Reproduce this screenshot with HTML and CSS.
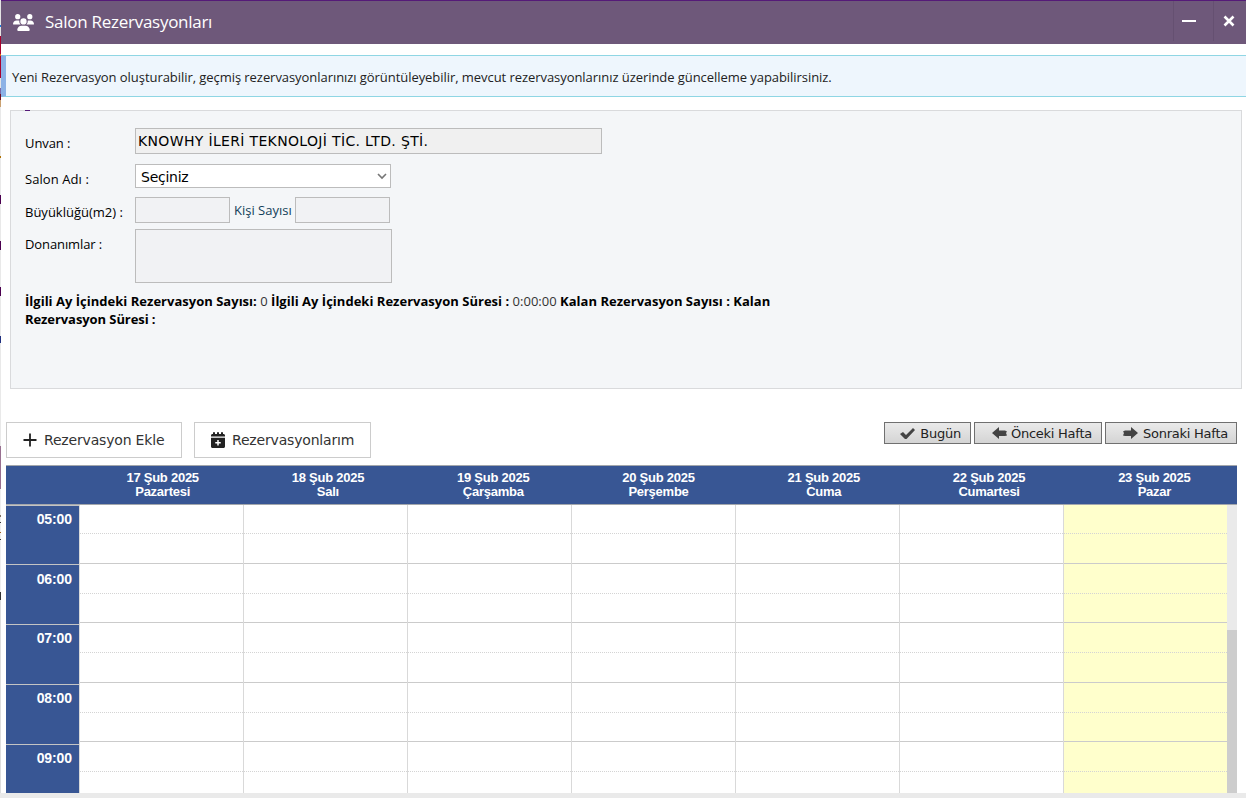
FILE: index.html
```html
<!DOCTYPE html>
<html lang="tr">
<head>
<meta charset="utf-8">
<title>Salon Rezervasyonları</title>
<link rel="stylesheet" href="styles.css">
</head>
<body>
<div class="app">
  <div class="edge"></div>
  <div class="window">
    <header class="titlebar">
      <svg class="users" viewBox="0 0 640 512" fill="#fff"><path d="M144 0a80 80 0 1 1 0 160A80 80 0 1 1 144 0zM512 0a80 80 0 1 1 0 160A80 80 0 1 1 512 0zM0 298.700C0 239.800 47.800 192 106.700 192h42.700c15.900 0 31 3.500 44.600 9.700-1.300 7.200-1.900 14.700-1.900 22.300 0 38.200 16.800 72.500 43.300 96H21.300C9.600 320 0 310.400 0 298.700zM405.300 320h-.7c26.600-23.500 43.300-57.800 43.300-96 0-7.600-.7-15-1.900-22.300 13.600-6.300 28.700-9.700 44.600-9.700h42.700C592.200 192 640 239.800 640 298.700c0 11.800-9.600 21.300-21.300 21.300zM224 224a96 96 0 1 1 192 0 96 96 0 1 1-192 0zM128 485.300C128 411.700 187.700 352 261.300 352h117.400C452.300 352 512 411.700 512 485.300c0 14.700-11.900 26.700-26.700 26.700H154.600c-14.700 0-26.600-12-26.600-26.700z"/></svg>
      <h1 class="title">Salon Rezervasyonları</h1>
      <button class="winbtn minimize"><svg width="14" height="14"><path d="M0 7h14" stroke="#fff" stroke-width="2"/></svg></button>
      <button class="winbtn close"><svg width="12" height="12"><path d="M1.500 1.500l9 9m0-9l-9 9" stroke="#fff" stroke-width="2.600"/></svg></button>
    </header>
    <div class="notice"><span class="notice-text">Yeni Rezervasyon oluşturabilir, geçmiş rezervasyonlarınızı görüntüleyebilir, mevcut rezervasyonlarınız üzerinde güncelleme yapabilirsiniz.</span></div>
    <section class="panel">
      <div class="legend-mark"></div>
      <div class="row row-name"><label class="l-name">Unvan :</label><div class="field name">KNOWHY İLERİ TEKNOLOJİ TİC. LTD. ŞTİ.</div></div>
      <div class="row row-room"><label class="l-room">Salon Adı :</label><div class="field select"><span>Seçiniz</span><svg width="10" height="7"><path d="M1 1l4 4 4-4" fill="none" stroke="#767676" stroke-width="1.600"/></svg></div></div>
      <div class="row row-size"><label class="l-size">Büyüklüğü(m2) :</label><div class="field small"></div><span class="capacity">Kişi Sayısı</span><div class="field small"></div></div>
      <div class="row row-equip"><label class="l-equip">Donanımlar :</label><div class="field area"></div></div>
      <p class="summary"><span class="line1"><b>İlgili Ay İçindeki Rezervasyon Sayısı:</b> <i>0</i> <b>İlgili Ay İçindeki Rezervasyon Süresi :</b> <i>0:00:00</i> <b>Kalan Rezervasyon Sayısı :</b> <b>Kalan</b></span><br><b class="line2">Rezervasyon Süresi :</b></p>
    </section>
    <div class="toolbar">
      <button class="action add"><svg width="14" height="14"><path d="M7 .5v13M.5 7h13" stroke="#222" stroke-width="1.800"/></svg><span>Rezervasyon Ekle</span></button>
      <button class="action mine"><svg width="14" height="16" viewBox="0 0 448 512" fill="#222"><path d="M96 0a32 32 0 0 1 32 32v32h64V32a32 32 0 0 1 64 0v32h64V32a32 32 0 0 1 64 0v32h16c27 0 48 21 48 48v32H0v-32c0-27 21-48 48-48h16V32A32 32 0 0 1 96 0zM0 184h448v280c0 27-21 48-48 48H48c-27 0-48-21-48-48zm200 72v64h-64v48h64v64h48v-64h64v-48h-64v-64z"/></svg><span>Rezervasyonlarım</span></button>
      <div class="nav">
        <button class="navbtn today"><svg width="15" height="11"><path d="M0 6l3-2 3 3 7-7 2 2-8.500 9H5z" fill="#444"/></svg><span>Bugün</span></button>
        <button class="navbtn prev"><svg width="15" height="12"><path d="M0 6l7-6v3.500h6l2 1L14 6l1 2.500-2 .5H7V12z" fill="#444"/></svg><span>Önceki Hafta</span></button>
        <button class="navbtn next"><svg width="15" height="12"><path d="M15 6L8 0v3.500H2l-2 1L1 6 0 8.500 2 9h6v3z" fill="#444"/></svg><span>Sonraki Hafta</span></button>
      </div>
    </div>
    <div class="calendar">
      <div class="days">
        <div class="day">17 Şub 2025<br>Pazartesi</div><div class="day">18 Şub 2025<br>Salı</div><div class="day">19 Şub 2025<br>Çarşamba</div><div class="day">20 Şub 2025<br>Perşembe</div><div class="day">21 Şub 2025<br>Cuma</div><div class="day">22 Şub 2025<br>Cumartesi</div><div class="day">23 Şub 2025<br>Pazar</div>
      </div>
      <div class="body">
        <div class="hours"><div class="hour first">05:00</div><div class="hour second">06:00</div><div class="hour">07:00</div><div class="hour">08:00</div><div class="hour">09:00</div></div>
        <div class="col"><i></i><i></i><i></i><i></i><i></i><i></i><i></i><i></i><i></i></div>
        <div class="col"><i></i><i></i><i></i><i></i><i></i><i></i><i></i><i></i><i></i></div>
        <div class="col"><i></i><i></i><i></i><i></i><i></i><i></i><i></i><i></i><i></i></div>
        <div class="col"><i></i><i></i><i></i><i></i><i></i><i></i><i></i><i></i><i></i></div>
        <div class="col"><i></i><i></i><i></i><i></i><i></i><i></i><i></i><i></i><i></i></div>
        <div class="col"><i></i><i></i><i></i><i></i><i></i><i></i><i></i><i></i><i></i></div>
        <div class="col sunday"><i></i><i></i><i></i><i></i><i></i><i></i><i></i><i></i><i></i></div>
        <div class="scroll"><div class="thumb"></div></div>
      </div>
    </div>
  </div>
</div>
<div class="bottom"></div>
</body>
</html>
```
FILE: styles.css
```css
* { box-sizing: border-box; }
body { margin: 0; width: 1246px; height: 798px; overflow: hidden; background: #fff; color: #000; font: 13px/18px "Open Sans", "Noto Sans", sans-serif; }
button { margin: 0; padding: 0; border-radius: 0; font: inherit; color: inherit; }
svg { display: block; flex: none; }
.app { display: flex; height: 793px; }
.bottom { height: 5px; background: #eaeaea; }
.edge { width: 1px; background: linear-gradient(#e4e4e4 0 25px, #1a7be0 25px 27px, #e4e4e4 27px 36px, #a8002d 36px 54px, #e07010 54px 56px, #a8002d 56px 78px, #e4e4e4 78px 88px, #7a68a8 88px 94px, #701020 94px 100px, #c9a070 100px 107px, #e9e9e9 107px 156px, #b07000 156px 158px, #e9e9e9 158px 195px, #4b0050 195px 204px, #e9e9e9 204px 241px, #4b0050 241px 250px, #e9e9e9 250px 287px, #4b0050 287px 296px, #e9e9e9 296px 336px, #203080 336px 343px, #e9e9e9 343px 446px, #987090 446px 489px, #eee 489px 515px, #807060 515px 517px, #eee 517px 522px, #333 522px 523px, #eee 523px 532px, #a06020 532px 533px, #eee 533px 539px, #333 539px 540px, #eee 540px 592px, #333 592px 600px, #ddd 600px); }
.window { flex: 1; min-width: 0; }
.titlebar { display: flex; align-items: center; height: 44px; padding-left: 12px; background: #6e587a; border-top: 1px solid #551a78; color: #fff; }
.users { width: 21px; height: 17px; }
.title { flex: 1; margin: 0 0 2px 11px; font-size: 17px; font-weight: 400; letter-spacing: -.27px; line-height: 24px; white-space: nowrap; }
.winbtn { height: 40px; align-self: flex-start; background: none; border: 0; border-left: 1px solid #655071; color: #fff; }
.minimize { width: 40px; padding-left: 8px; }
.close { width: 33px; padding-left: 9px; }
.notice { height: 42px; margin-top: 11px; padding: 12px 0 0 6px; background: #eef6fd; border: solid #8fd6e4; border-width: 1px 0; border-left: 5px solid #8cb2e6; white-space: nowrap; color: #222; }
.notice-text { letter-spacing: -.057px; }
.panel { width: 1232px; height: 279px; margin: 13px 0 0 9px; padding: 0 14px; background: #f4f6f8; border: 1px solid #d9dadc; }
.legend-mark { width: 5px; height: 1px; margin-top: -1px; background: #551a78; }
.row { display: flex; }
.row label { width: 110px; white-space: nowrap; letter-spacing: -.1px; }
.row .l-room { letter-spacing: .08px; }
.row .l-size { letter-spacing: 0; }
.field { border: 1px solid #bcbcbc; background: #f1f2f4; font-family: "DejaVu Sans", sans-serif; font-size: 14px; }
.row-name { margin-top: 17px; height: 36px; }
.row-name label, .row-room label { padding-top: 6px; }
.name { width: 467px; height: 26px; padding: 3px 2px; background: #f0f0f0; letter-spacing: .34px; white-space: nowrap; }
.row-room { height: 33px; }
.select { width: 256px; height: 24px; padding: 0 3px 0 5px; display: flex; align-items: center; justify-content: space-between; background: #fff; }
.select span { padding-top: 2px; letter-spacing: -.25px; }
.row-size { height: 32px; }
.row-size label { padding-top: 6px; }
.small { width: 95px; height: 26px; }
.capacity { width: 65px; padding: 4px 0 0 4px; color: #123e5a; white-space: nowrap; letter-spacing: 0; }
.row-equip { height: 54px; }
.row-equip label { padding-top: 6px; }
.area { width: 257px; height: 54px; }
.summary { margin: 9px 0 0; white-space: nowrap; }
.summary i { font-style: normal; color: #333; }
.line1 { letter-spacing: .015px; }
.line2 { letter-spacing: -.08px; }
.toolbar { display: flex; height: 43px; margin: 33px 9px 0 5px; font-family: "DejaVu Sans", sans-serif; }
.action { display: flex; align-items: center; height: 36px; background: #fff; border: 1px solid #ccc; font-size: 14px; letter-spacing: -.18px; color: #333; white-space: nowrap; }
.add { width: 176px; padding-left: 16px; gap: 7px; }
.mine { width: 177px; margin-left: 12px; padding-left: 16px; gap: 7px; }
.nav { display: flex; gap: 3px; margin-left: auto; }
.navbtn { display: flex; align-items: center; justify-content: flex-end; gap: 5px; height: 22px; padding-right: 9px; border: 1px solid #707070; background: linear-gradient(#eaeaea, #d4d4d4); font-size: 13px; letter-spacing: -.25px; color: #222; white-space: nowrap; }
.navbtn span { padding-top: 1px; }
.today { width: 87px; }
.prev { width: 128px; gap: 4px; }
.next { width: 132px; padding-right: 8px; }
.calendar { width: 1231px; height: 328px; margin-left: 5px; font-family: "Liberation Sans", Arial, sans-serif; font-weight: 700; color: #fff; }
.days { display: grid; grid-template-columns: repeat(7, 1fr); height: 40px; padding: 5px 0 0 74px; background: #385694; border: solid #a3a7ac; border-width: 1px 0; }
.day { font-size: 13px; line-height: 14px; text-align: center; letter-spacing: -.25px; }
.body { display: flex; height: 288px; overflow: hidden; }
.hours { width: 73px; background: #385694; }
.hour { height: 60px; padding: 4px 7px 0 0; border-top: 1px solid #c4c4c4; text-align: right; font-size: 14px; line-height: 18px; letter-spacing: -.1px; }
.hour.first { height: 59px; }
.hour.second { padding-top: 5px; }
.col { width: 164px; border-left: 1px solid #d9d9d9; }
.sunday { background: #ffffcc; }
.col i { display: block; height: 30px; border-bottom: 1px dotted #d4d4d4; }
.col i:nth-child(even) { border-bottom: 1px solid #cbcbcb; }
.col i:nth-child(1), .col i:nth-child(4), .col i:nth-child(8) { height: 29px; }
.scroll { width: 10px; padding-top: 125px; background: #eaeaea; }
.thumb { height: 163px; background: #cdcdcd; }
```
